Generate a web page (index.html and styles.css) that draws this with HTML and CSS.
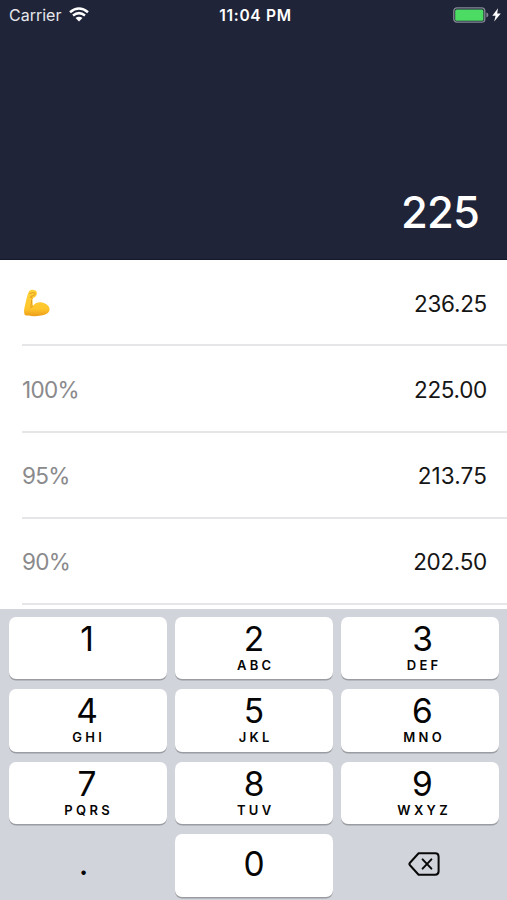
FILE: index.html
```html
<!DOCTYPE html>
<html lang="en">
<head>
<meta charset="utf-8">
<title>Percentages</title>
<link rel="stylesheet" href="styles.css">
</head>
<body>
<main class="phone">
  <header class="display">
    <div class="status">
      <div class="status-left">
        <span class="carrier">Carrier</span>
        <svg class="wifi" viewBox="0 0 20 15" aria-hidden="true"><path d="M1 5.2Q10-2.3 19 5.2M4 8.5Q10 3.7 16 8.5" fill="none" stroke="#fff" stroke-width="2.5"/><path d="M6.5 11Q10 8.3 13.5 11L10 14.5Z" fill="#fff"/></svg>
      </div>
      <span class="time">11:04 PM</span>
      <svg class="battery" viewBox="0 0 48 16" aria-hidden="true"><rect x=".8" y=".8" width="31" height="14.4" rx="3.2" fill="none" stroke="#858995" stroke-width="1.3"/><rect x="2.2" y="2.4" width="28.2" height="11.4" rx="1.5" fill="#4cdb63"/><path d="M33.4 5.6q2 .5 2 2.4t-2 2.4z" fill="#858995"/><path d="M45 1.2L39.3 8.8H42.6L41.2 14.6L47.8 6.6H44.2Z" fill="#fff"/></svg>
    </div>
    <div class="entry">225</div>
  </header>
  <section class="list">
    <div class="row">
      <svg class="muscle" viewBox="0 0 28 28" aria-label="Max"><defs><linearGradient id="skin" x1="0" y1="0" x2="0" y2="1"><stop offset="0" stop-color="#ffd33b"/><stop offset=".72" stop-color="#ffc52c"/><stop offset="1" stop-color="#ec9d18"/></linearGradient></defs><path d="M5.8 2.8C7 .6 10.4 .3 12.5 1.5C14.5 2.9 14.2 6 12.5 7.6C11.4 8.7 9.9 8.9 9.5 9.4C9.3 11.4 9.8 13.6 9.8 17C12.6 13.4 16.4 12.8 20 13.8C24 15 26.7 17.5 26.6 20.3C26.5 24 22.8 25.7 18 26.6C12.5 27.6 5.3 27.3 1.8 26C.5 23.5 1 20 2.2 15.6C3.2 11.8 3.8 7 5.8 2.8Z" fill="url(#skin)"/><path d="M6.8 4.4Q9.5 3 12 4M8 7.3Q10.5 7.4 12.3 5.4M9.5 9.4L7.4 8M9.8 17Q8.4 17.6 7.5 19M7.8 17Q8.8 15 8.7 11" fill="none" stroke="#d98a16" stroke-width=".8" stroke-linecap="round"/></svg>
      <span class="value">236.25</span>
    </div>
    <div class="row"><span class="percent">100%</span><span class="value">225.00</span></div>
    <div class="row"><span class="percent">95%</span><span class="value narrow">213.75</span></div>
    <div class="row"><span class="percent">90%</span><span class="value">202.50</span></div>
  </section>
  <section class="keypad">
    <div class="key first"><span class="digit">1</span></div>
    <div class="key"><span class="digit">2</span><span class="letters">ABC</span></div>
    <div class="key last"><span class="digit">3</span><span class="letters">DEF</span></div>
    <div class="key first"><span class="digit">4</span><span class="letters">GHI</span></div>
    <div class="key"><span class="digit">5</span><span class="letters">JKL</span></div>
    <div class="key last"><span class="digit">6</span><span class="letters">MNO</span></div>
    <div class="key first"><span class="digit">7</span><span class="letters">PQRS</span></div>
    <div class="key"><span class="digit">8</span><span class="letters">TUV</span></div>
    <div class="key last"><span class="digit">9</span><span class="letters">WXYZ</span></div>
    <div class="key plain point"><span class="digit">.</span></div>
    <div class="key zero"><span class="digit">0</span></div>
    <div class="key plain erase"><svg class="delete" viewBox="0 0 32 24" aria-label="Delete"><path d="M10.6 1.3H27.2Q30.6 1.3 30.6 4.7V19.3Q30.6 22.7 27.2 22.7H10.6L2 13.3Q.8 12 2 10.7Z" fill="none" stroke="#080808" stroke-width="2" stroke-linejoin="round"/><path d="M14.6 7.4L23.4 16.6M23.4 7.4L14.6 16.6" stroke="#080808" stroke-width="2" stroke-linecap="round"/></svg></div>
  </section>
</main>
</body>
</html>
```
FILE: styles.css
```css
* { box-sizing: border-box; }

body {
  margin: 0;
  font-family: Inter, "Liberation Sans", sans-serif;
  background: #fff;
}

.phone {
  width: 507px;
  height: 900px;
  display: flex;
  flex-direction: column;
  overflow: hidden;
}

.display {
  height: 260px;
  flex: none;
  display: flex;
  flex-direction: column;
  justify-content: space-between;
  background: #1f2438;
  border-bottom: 1px solid #14182a;
  color: #fff;
}

.status {
  height: 30px;
  display: grid;
  grid-template-columns: 1fr auto 1fr;
  align-items: center;
  padding: 0 6px 0 9px;
  font-size: 16px;
}

.status-left { display: flex; align-items: center; gap: 8px; }
.carrier { color: #e6e7ec; letter-spacing: 0; }
.wifi { width: 20px; height: 15px; margin-top: -2px; }
.time { font-weight: 600; font-size: 15.5px; letter-spacing: 0.7px; margin-right: -1px; }
.battery { width: 48px; height: 16px; justify-self: end; }

.entry {
  padding: 0 28px 20px 0;
  text-align: right;
  font-size: 43.5px;
  line-height: 54px;
  font-weight: 550;
  letter-spacing: -0.8px;
}

.list { height: 349px; flex: none; overflow: hidden; }

.row {
  height: 86.25px;
  margin-left: 22px;
  padding-right: 20px;
  padding-top: 2px;
  display: flex;
  align-items: center;
  justify-content: space-between;
  border-bottom: 2px solid #e6e6e8;
  font-size: 22.5px;
}

.muscle { width: 28px; height: 28px; margin-left: 1px; }
.percent { color: #8a8a8c; letter-spacing: -0.7px; }
.value { color: #151515; letter-spacing: -0.3px; }
.narrow { letter-spacing: 0.1px; }

.keypad {
  flex: 1;
  display: grid;
  grid-template-columns: repeat(3, 158px);
  grid-auto-rows: 62.5px;
  gap: 10px 8px;
  padding: 7.5px 9px;
  background: #d1d4db;
}

.key {
  display: flex;
  flex-direction: column;
  align-items: center;
  padding-top: 4px;
  border-radius: 7px;
  background: #fff;
  box-shadow: 0 1.5px 0 #9a9ca1;
  color: #050505;
}

.digit { font-size: 33.5px; line-height: 36px; font-weight: 380; }

.letters {
  font-size: 13px;
  line-height: 16px;
  font-weight: 600;
  letter-spacing: 3.3px;
  margin-right: -3.3px;
}

.first { padding-right: 2px; }
.last { padding-left: 5px; }
.plain { background: none; box-shadow: none; }
.plain, .zero { justify-content: center; padding-top: 0; }
.zero { padding-bottom: 2px; }
.point { padding-right: 9px; padding-bottom: 4px; }
.erase { padding-left: 7px; }
.delete { width: 32px; height: 24px; margin-top: -3px; }
```
